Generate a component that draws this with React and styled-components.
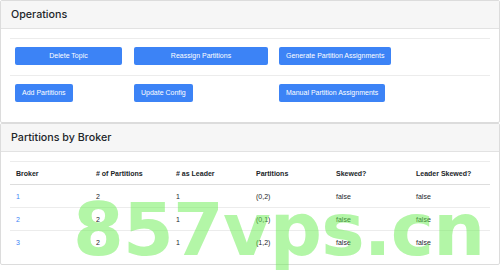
import React from "react";
import styled, { createGlobalStyle } from "styled-components";

const Global = createGlobalStyle`
  * { box-sizing: border-box; }
  body {
    margin: 0;
    background: #fff;
    font-family: "Liberation Sans", Arial, sans-serif;
    color: #212529;
  }
`;

const Page = styled.div`
  position: relative;
  width: 500px;
  height: 273px;
  overflow: hidden;
`;

const Card = styled.div`
  border: 1px solid #dcdcdc;
  border-radius: 2px;
  background: #fff;
`;

const CardHeader = styled.div`
  height: 28px;
  display: flex;
  align-items: center;
  padding: 0 10px;
  background: #f6f6f6;
  border-bottom: 1px solid #e2e2e2;
  font-family: Inter, "Liberation Sans", sans-serif;
  font-size: 10.7px;
  font-weight: 500;
  color: #212529;
`;

const CardBody = styled.div`
  padding: 9px 9px 10px;
`;

const OpsRow = styled.div`
  display: grid;
  grid-template-columns: 119px 145px 1fr;
  height: 37px;
  border-top: 1px solid #ececec;
`;

const OpsCell = styled.div`
  padding: 5px 5px 0;
`;

const Button = styled.button`
  height: 18px;
  width: ${(p) => (p.$width ? `${p.$width}px` : "auto")};
  padding: 0 7px;
  border: none;
  border-radius: 2px;
  background: #3c83f6;
  color: #fff;
  font-family: "Liberation Sans", Arial, sans-serif;
  font-size: 7px;
  cursor: pointer;
`;

const Table = styled.table`
  width: 100%;
  border-collapse: collapse;
  table-layout: fixed;
  font-size: 7px;
`;

const Th = styled.th`
  height: 23px;
  padding: 0 6px;
  text-align: left;
  font-weight: bold;
  border-top: 1px solid #ececec;
  border-bottom: 1px solid #dddddd;
`;

const Td = styled.td`
  height: 23px;
  padding: 0 6px;
  border-top: ${(p) => (p.$first ? "none" : "1px solid #ececec")};
`;

const Link = styled.a`
  color: #3c83f6;
  text-decoration: none;
`;

const Watermark = styled.div`
  position: absolute;
  left: 73px;
  top: 193px;
  font-family: "DejaVu Sans", sans-serif;
  font-weight: bold;
  font-size: 73px;
  line-height: 1;
  letter-spacing: -0.8px;
  color: rgba(104, 238, 80, 0.5);
  pointer-events: none;
  white-space: nowrap;
`;

const brokers = [
  { id: 1, count: 2, leader: 1, parts: "(0,2)" },
  { id: 2, count: 2, leader: 1, parts: "(0,1)" },
  { id: 3, count: 2, leader: 1, parts: "(1,2)" },
];

export default function App() {
  return (
    <Page>
      <Global />
      <Card>
        <CardHeader>Operations</CardHeader>
        <CardBody>
          <OpsRow>
            <OpsCell>
              <Button $width={107}>Delete Topic</Button>
            </OpsCell>
            <OpsCell>
              <Button $width={134}>Reassign Partitions</Button>
            </OpsCell>
            <OpsCell>
              <Button>Generate Partition Assignments</Button>
            </OpsCell>
          </OpsRow>
          <OpsRow>
            <OpsCell>
              <Button>Add Partitions</Button>
            </OpsCell>
            <OpsCell>
              <Button>Update Config</Button>
            </OpsCell>
            <OpsCell>
              <Button>Manual Partition Assignments</Button>
            </OpsCell>
          </OpsRow>
        </CardBody>
      </Card>
      <Card>
        <CardHeader>Partitions by Broker</CardHeader>
        <CardBody>
          <Table>
            <thead>
              <tr>
                <Th>Broker</Th>
                <Th># of Partitions</Th>
                <Th># as Leader</Th>
                <Th>Partitions</Th>
                <Th>Skewed?</Th>
                <Th>Leader Skewed?</Th>
              </tr>
            </thead>
            <tbody>
              {brokers.map((b, i) => (
                <tr key={b.id}>
                  <Td $first={i === 0}>
                    <Link href="#">{b.id}</Link>
                  </Td>
                  <Td $first={i === 0}>{b.count}</Td>
                  <Td $first={i === 0}>{b.leader}</Td>
                  <Td $first={i === 0}>{b.parts}</Td>
                  <Td $first={i === 0}>false</Td>
                  <Td $first={i === 0}>false</Td>
                </tr>
              ))}
            </tbody>
          </Table>
        </CardBody>
      </Card>
      <Watermark>857vps.cn</Watermark>
    </Page>
  );
}
